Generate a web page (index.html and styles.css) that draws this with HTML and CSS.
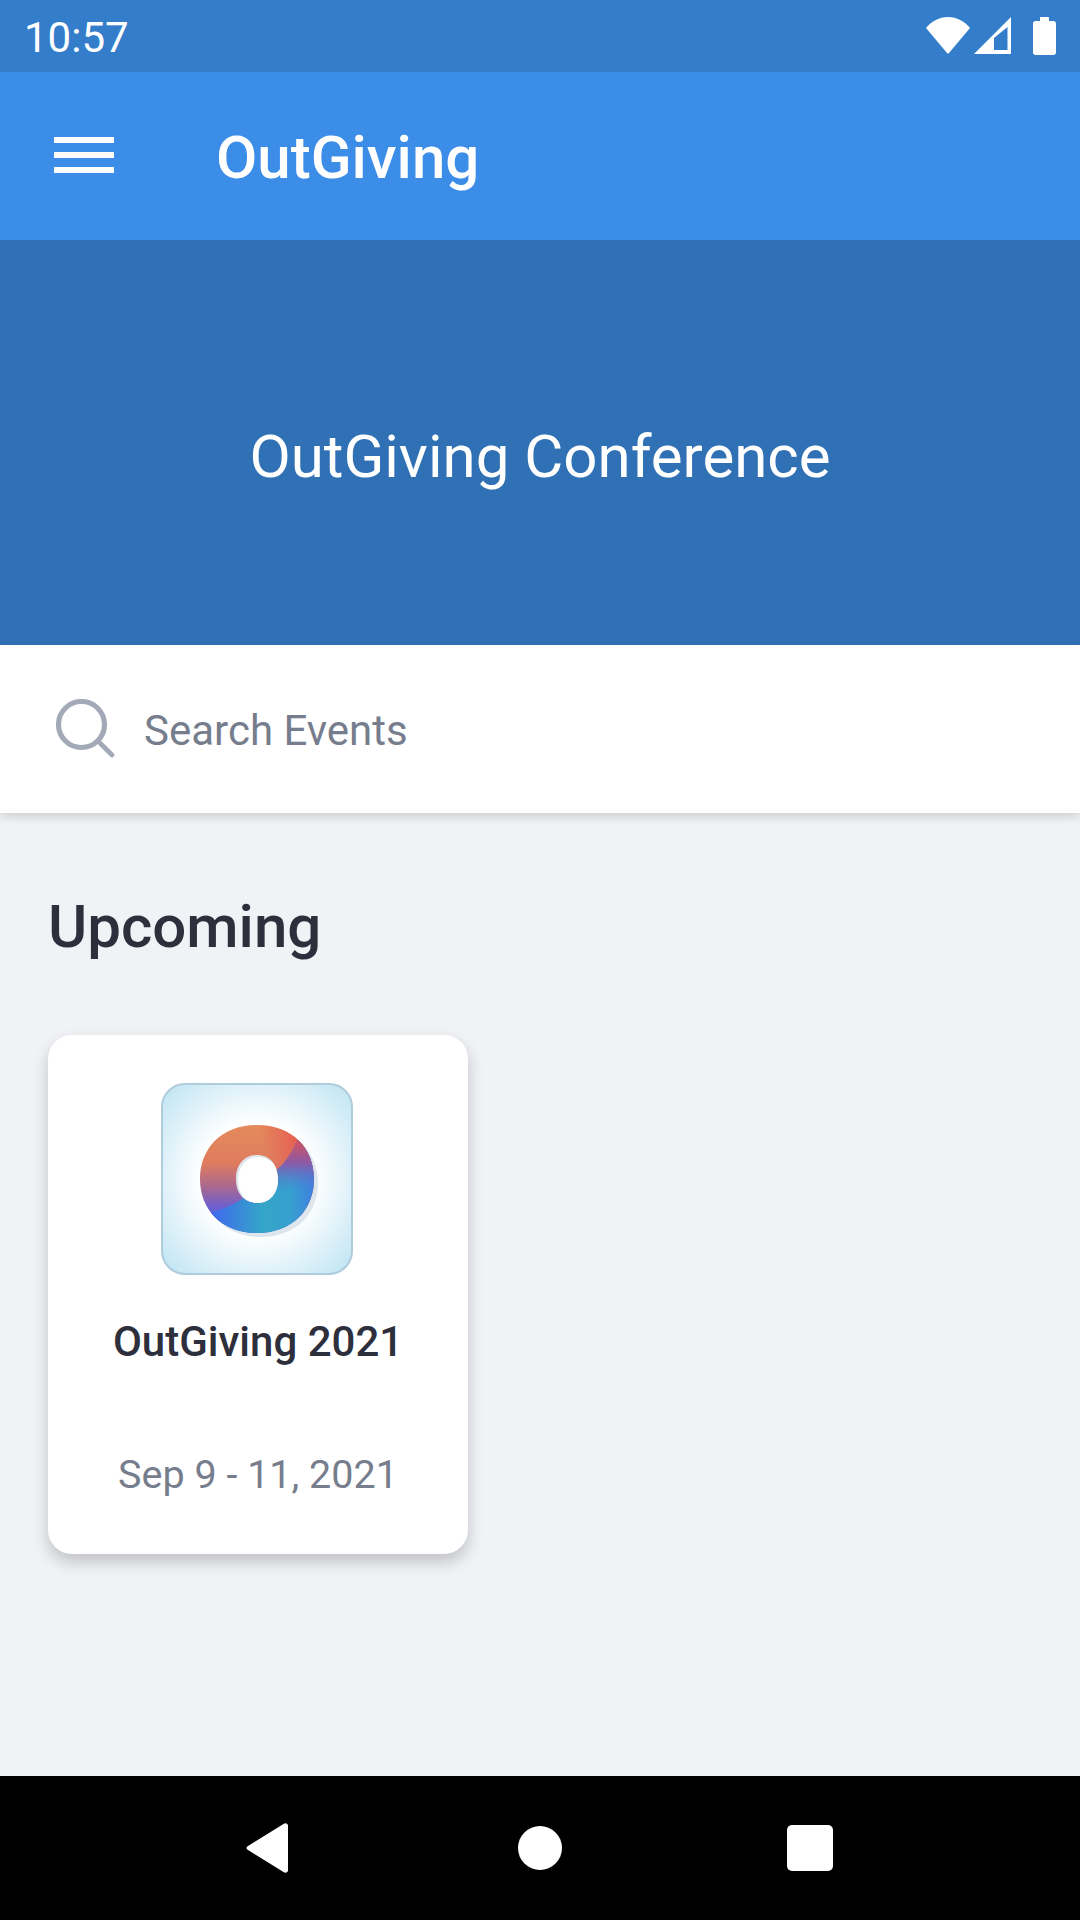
FILE: index.html
```html
<!DOCTYPE html>
<html>
<head>
  <title>OutGiving</title>
  <link rel="stylesheet" href="styles.css">
</head>
<body>
  <div class="status-bar">
    <span class="time">10:57</span>
    <div class="status-icons">
      <svg width="46" height="38" viewBox="0 0 46 38"><path d="M1 11C7 4 14 0 23 0s16 4 22 11L24 36c-.6.7-1.400.7-2 0z" fill="#fff"/></svg>
      <svg width="38" height="38" viewBox="0 0 38 38"><path fill-rule="evenodd" d="M0 37L37 0v37zM20 33h13.500V10L20 21z" fill="#fff"/></svg>
      <svg class="battery" width="23" height="38" viewBox="0 0 23 38"><path d="M7 1c0-.6.400-1 1-1h7c.6 0 1 .4 1 1v3h4.500C21.900 4 23 5.100 23 6.500v29c0 1.400-1.100 2.500-2.500 2.500h-18C1.100 38 0 36.900 0 35.500v-29C0 5.100 1.100 4 2.500 4H7z" fill="#fff"/></svg>
    </div>
  </div>

  <header class="app-bar">
    <div class="menu-icon"><span></span><span></span><span></span></div>
    <h1>OutGiving</h1>
  </header>

  <div class="banner">OutGiving Conference</div>

  <div class="search">
    <svg class="search-icon" width="60" height="60" viewBox="0 0 60 60"><circle cx="26.500" cy="25.500" r="23" fill="none" stroke="#a3a9b7" stroke-width="5.200"/><path d="M45 44l12 12" stroke="#a3a9b7" stroke-width="4.600" stroke-linecap="round"/></svg>
    <span class="search-label">Search Events</span>
  </div>

  <main class="content">
    <h2>Upcoming</h2>
    <div class="card">
      <div class="logo">
        <svg width="132" height="124" viewBox="-5 -4 132 124">
          <defs>
            <path id="ring" fill-rule="evenodd" d="M61 4c36 0 57 24 57 54s-21 54-57 54S4 88 4 58 25 4 61 4zm0 30c-13 0-21 10-21 24s8 24 21 24 21-10 21-24-8-24-21-24z"/>
            <linearGradient id="ringBase" x1="0" y1="0" x2="0" y2="1">
              <stop offset="0" stop-color="#e48a5c"/>
              <stop offset="0.350" stop-color="#e07c5e"/>
              <stop offset="0.550" stop-color="#b06a88"/>
              <stop offset="0.750" stop-color="#7060cc"/>
              <stop offset="0.900" stop-color="#4c68e4"/>
            </linearGradient>
            <linearGradient id="ringRed" x1="0" y1="0.300" x2="1" y2="0">
              <stop offset="0.550" stop-color="#e8554f" stop-opacity="0"/>
              <stop offset="0.900" stop-color="#e8554f"/>
            </linearGradient>
            <linearGradient id="lowerBase" x1="0" y1="0" x2="1" y2="0">
              <stop offset="0.100" stop-color="#4069ee"/>
              <stop offset="0.550" stop-color="#34a5c8"/>
              <stop offset="0.800" stop-color="#36a0cf"/>
              <stop offset="1" stop-color="#3f80e0"/>
            </linearGradient>
            <linearGradient id="lowerTop" gradientUnits="userSpaceOnUse" x1="0" y1="18" x2="0" y2="72">
              <stop offset="0" stop-color="#d8525a"/>
              <stop offset="0.450" stop-color="#8a5aa8"/>
              <stop offset="1" stop-color="#3f80e0" stop-opacity="0"/>
            </linearGradient>
            <clipPath id="lowerClip">
              <path d="M0 96L14 92C24 89 36 85 46 78L84 46C92 38 97 29 101 19L130 0V130H0z"/>
            </clipPath>
          </defs>
          <use href="#ring" fill="#dde6ec" transform="translate(4 4)"/>
          <use href="#ring" fill="url(#ringBase)"/>
          <use href="#ring" fill="url(#ringRed)"/>
          <g clip-path="url(#lowerClip)">
            <use href="#ring" fill="url(#lowerBase)"/>
            <use href="#ring" fill="url(#lowerTop)"/>
          </g>
          <path d="M62 36c12 0 20 10 20 23s-8 23-20 23-20-10-20-23 8-23 20-23z" fill="#fff"/>
        </svg>
      </div>
      <div class="card-title">OutGiving 2021</div>
      <div class="card-date">Sep 9 - 11, 2021</div>
    </div>
  </main>

  <nav class="nav-bar">
    <svg width="42" height="50" viewBox="0 0 42 50"><path d="M42 3v44c0 2.500-2.500 3.500-4.500 2L2 27c-2-1-2-3 0-4L37.500 1C39.500-.5 42 .5 42 3z" fill="#fff"/></svg>
    <div class="nav-circle"></div>
    <div class="nav-square"></div>
  </nav>
</body>
</html>
```

FILE: styles.css
```css
* { box-sizing: border-box; }
html, body { margin: 0; padding: 0; }
body { width: 1080px; height: 1920px; display: flex; flex-direction: column; font-family: Roboto, "Liberation Sans", sans-serif; background: #f0f2f6; overflow: hidden; }

.status-bar { height: 72px; flex: none; background: #337dca; color: #fff; display: flex; align-items: center; justify-content: space-between; padding: 0 24px 0 24px; }
.time { font-size: 42px; margin-top: 2px; }
.status-icons { display: flex; align-items: center; gap: 3px; }
.battery { margin-left: 18px; }

.app-bar { height: 168px; flex: none; background: #3b8de8; color: #fff; display: flex; align-items: center; padding-left: 54px; position: relative; z-index: 1; }
.app-bar h1 { margin: 0 0 0 102px; padding-top: 2px; font-size: 60px; font-weight: 500; }
.menu-icon { width: 60px; margin-bottom: 3px; display: flex; flex-direction: column; gap: 9px; }
.menu-icon span { height: 6px; background: #fff; }

.banner { height: 405px; flex: none; background: #3071b6; color: #fff; display: flex; align-items: center; justify-content: center; font-size: 60px; padding-top: 28px; }

.search { height: 168px; flex: none; background: #fff; display: flex; align-items: center; padding-left: 55px; gap: 29px; box-shadow: 0 3px 10px rgba(0, 0, 0, 0.16); position: relative; }
.search-label { font-size: 42px; color: #767d8c; padding-top: 2px; }

.content { flex: 1; padding: 0 48px; }
.content h2 { margin: 0; padding-top: 81px; font-size: 60px; font-weight: 500; color: #2d303c; line-height: 66px; }

.card { width: 420px; height: 519px; margin-top: 75px; background: #fff; border-radius: 24px; box-shadow: 0 8px 16px rgba(0, 0, 0, 0.2); display: flex; flex-direction: column; align-items: center; padding-top: 48px; }
.logo { width: 192px; height: 192px; margin-right: 2px; border: 2px solid #aeccdc; border-radius: 24px; background: radial-gradient(circle at 50% 50%, #fff 42%, #bde3f3 100%); display: flex; align-items: center; justify-content: center; }
.card-title { margin-top: 42px; font-size: 42px; font-weight: 500; color: #2d303c; }
.card-date { margin-top: 85px; font-size: 39.5px; color: #767d8c; }

.nav-bar { height: 144px; flex: none; background: #000; display: flex; align-items: center; }
.nav-bar svg { margin-left: 246px; }
.nav-circle { width: 44px; height: 44px; border-radius: 50%; background: #fff; margin-left: 230px; }
.nav-square { width: 46px; height: 46px; border-radius: 5px; background: #fff; margin-left: 225px; }
```
